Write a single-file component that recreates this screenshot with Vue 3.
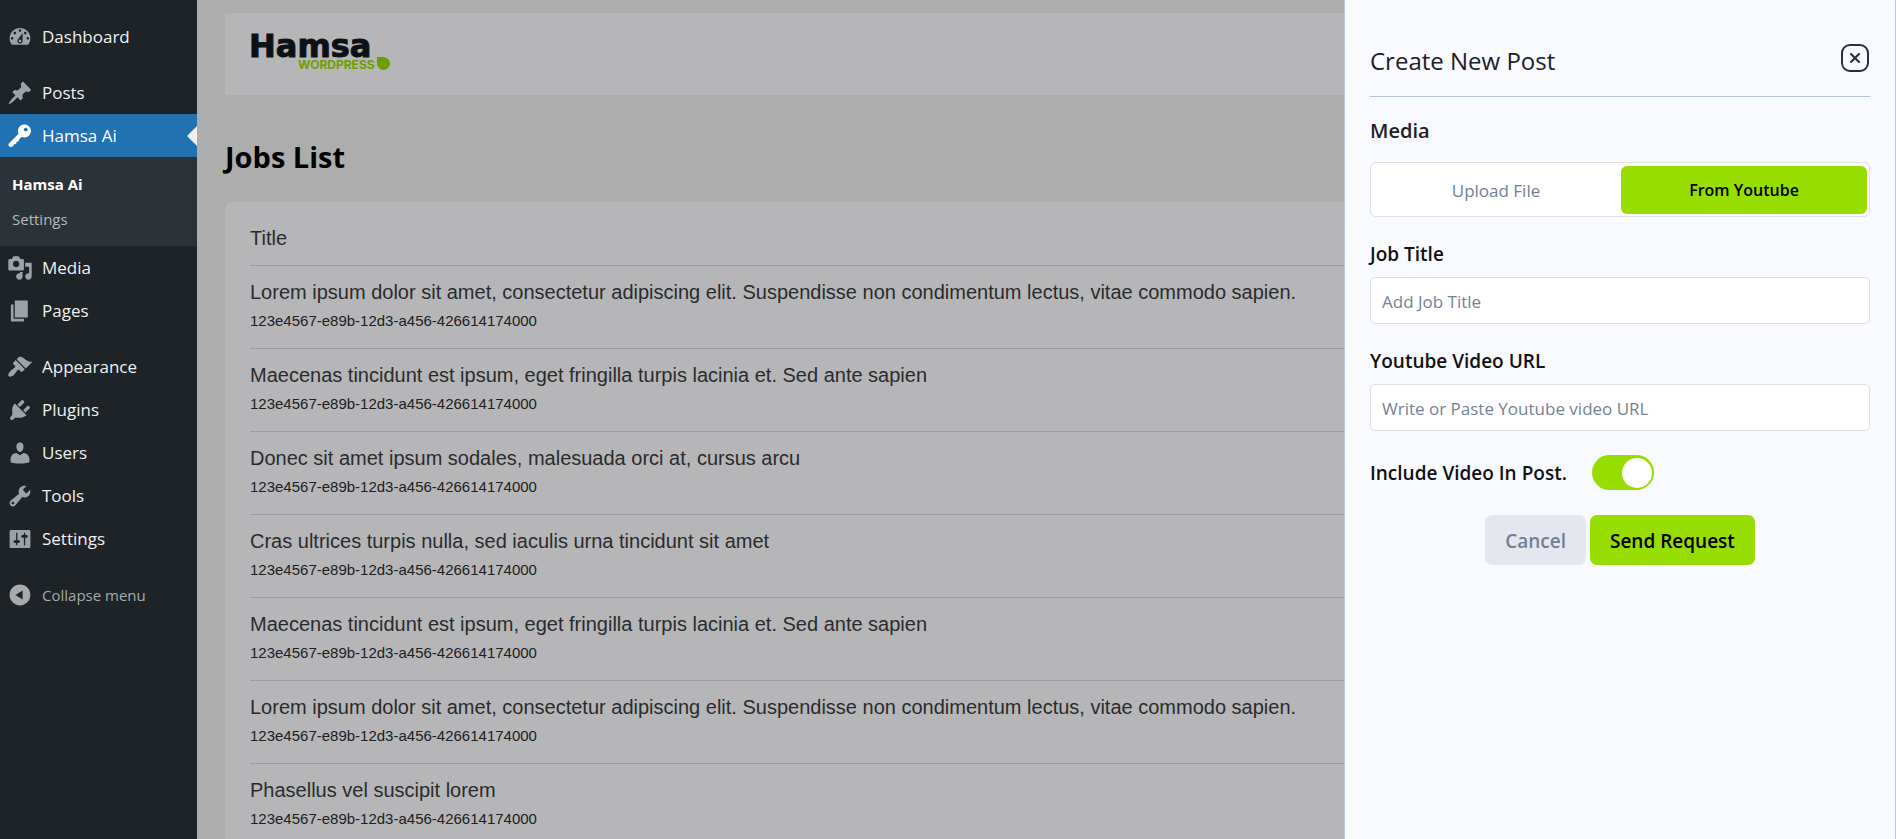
<script setup>
import { ref } from 'vue'

const icons = {
  dashboard: 'M3.76 16h12.48c1.1-1.37 1.76-3.11 1.76-5 0-4.42-3.58-8-8-8s-8 3.58-8 8c0 1.89.66 3.63 1.76 5zM10 4c.55 0 1 .45 1 1s-.45 1-1 1-1-.45-1-1 .45-1 1-1zM6 6c.55 0 1 .45 1 1s-.45 1-1 1-1-.45-1-1 .45-1 1-1zm8 0c.55 0 1 .45 1 1s-.45 1-1 1-1-.45-1-1 .45-1 1-1zm-5.37 5.55L12 7v6c0 1.1-.9 2-2 2s-2-.9-2-2c0-.57.24-1.08.63-1.45zM4 10c.55 0 1 .45 1 1s-.45 1-1 1-1-.45-1-1 .45-1 1-1zm12 0c.55 0 1 .45 1 1s-.45 1-1 1-1-.45-1-1 .45-1 1-1zm-5 3c0-.55-.45-1-1-1s-1 .45-1 1 .45 1 1 1 1-.45 1-1z',
  pin: 'M10.44 3.02l1.82-1.82 6.36 6.35-1.83 1.82c-1.05-.68-2.48-.57-3.41.36l-.75.75c-.92.93-1.04 2.35-.35 3.41l-1.83 1.82-2.41-2.41-2.8 2.79c-.42.42-3.38 2.71-3.8 2.29s1.86-3.39 2.28-3.81l2.79-2.79L4.1 9.36l1.83-1.82c1.05.69 2.48.57 3.4-.36l.75-.75c.93-.92 1.05-2.35.36-3.41z',
  key: 'M16.95 2.58c1.96 1.95 1.96 5.12 0 7.07-1.51 1.51-3.75 1.84-5.59 1.01l-1.87 1.9-.4 1.5-1.6.3-.4 1.6-1.5.3L4.6 17.6c-.7.6-1.9 1.1-2.8.5-1-.7-.9-1.9-.2-2.6l7.35-7.19c-.92-1.87-.62-4.18.93-5.73 1.95-1.96 5.12-1.96 7.07 0zm-2.51 4c.84 0 1.5-.7 1.5-1.5 0-.83-.66-1.5-1.5-1.5-.83 0-1.5.67-1.5 1.5 0 .8.67 1.5 1.5 1.5z',
  media: 'M13 11V4c0-.55-.45-1-1-1h-1.67L9 1H5L3.67 3H2c-.55 0-1 .45-1 1v7c0 .55.45 1 1 1h10c.55 0 1-.45 1-1zM7 4.5c1.38 0 2.5 1.12 2.5 2.5S8.38 9.5 7 9.5 4.5 8.38 4.5 7 5.62 4.5 7 4.5zM14 6h5v10.5c0 1.38-1.12 2.5-2.5 2.5S14 17.88 14 16.5s1.12-2.5 2.5-2.5c.17 0 .34.02.5.05V9h-3V6zm-4 8.05V13h2v3.5c0 1.38-1.12 2.5-2.5 2.5S7 17.88 7 16.5 8.12 14 9.5 14c.17 0 .34.02.5.05z',
  pages: 'M6 15V2h10v13H6zm-1 1h8v2H3V5h2v11z',
  appearance: 'M14.48 11.06L7.41 3.99l1.5-1.5c.5-.56 2.3-.47 3.51.32 1.21.8 1.43 1.28 2.91 2.1 1.18.64 2.45 1.26 4.45.85zm-.71.71L6.7 4.7 4.93 6.47c-.39.39-.39 1.02 0 1.41l1.06 1.06c.39.39.39 1.03 0 1.42-.6.6-1.43 1.11-2.21 1.69-.35.26-.7.53-1.01.84C1.43 14.23.4 16.08 1.4 17.07c.99 1 2.84-.03 4.18-1.36.31-.31.58-.66.85-1.02.57-.78 1.08-1.61 1.69-2.21.39-.39 1.02-.39 1.41 0l1.06 1.06c.39.39 1.02.39 1.41 0z',
  plugins: 'M13.11 4.36L9.87 7.6 8 5.73l3.24-3.24c.35-.34 1.05-.2 1.56.32.52.51.66 1.21.31 1.55zm-8 1.77l.91-1.12 9.01 9.01-1.19.84c-.71.71-2.63 1.16-3.82 1.16H6.14L4.9 17.26c-.59.59-1.54.59-2.12 0-.59-.58-.59-1.53 0-2.12l1.24-1.24v-3.88c0-1.13.4-3.19 1.09-3.89zm7.26 3.97l3.24-3.24c.34-.35 1.04-.21 1.55.31.52.51.66 1.21.31 1.55l-3.24 3.25z',
  users: 'M10 9.25c-2.27 0-2.73-3.44-2.73-3.44C7 4.02 7.82 2 9.97 2c2.16 0 2.98 2.02 2.71 3.81 0 0-.41 3.44-2.68 3.44zm0 2.57L12.72 10c2.39 0 4.52 2.33 4.52 4.53v2.49s-3.65 1.13-7.24 1.13c-3.65 0-7.24-1.13-7.24-1.13v-2.49c0-2.25 1.94-4.48 4.47-4.48z',
  tools: 'M16.68 9.77c-1.34 1.34-3.3 1.67-4.95.99l-5.41 6.52c-.99.99-2.59.99-3.58 0s-.99-2.59 0-3.57l6.52-5.42c-.68-1.65-.35-3.61.99-4.95 1.28-1.28 3.12-1.62 4.72-1.06l-2.89 2.89 2.82 2.82 2.86-2.87c.53 1.58.18 3.39-1.08 4.65zM3.81 16.21c.4.39 1.04.39 1.43 0 .4-.4.4-1.04 0-1.43-.39-.4-1.03-.4-1.43 0-.39.39-.39 1.03 0 1.43z',
  settings: 'M18 16V4c0-.55-.45-1-1-1H3c-.55 0-1 .45-1 1v12c0 .55.45 1 1 1h14c.55 0 1-.45 1-1zM8 11h1c.55 0 1 .45 1 1s-.45 1-1 1H8v1.5c0 .28-.22.5-.5.5s-.5-.22-.5-.5V13H6c-.55 0-1-.45-1-1s.45-1 1-1h1V5.5c0-.28.22-.5.5-.5s.5.22.5.5V11zm5-2h-1c-.55 0-1-.45-1-1s.45-1 1-1h1V5.5c0-.28.22-.5.5-.5s.5.22.5.5V7h1c.55 0 1 .45 1 1s-.45 1-1 1h-1v5.5c0 .28-.22.5-.5.5s-.5-.22-.5-.5V9z',
  collapse: 'M10 2c4.42 0 8 3.58 8 8s-3.58 8-8 8-8-3.58-8-8 3.58-8 8-8zm2 4.500L6.500 10l5.500 3.500z',
}

const menu = [
  [{ label: 'Dashboard', icon: 'dashboard' }],
  [
    { label: 'Posts', icon: 'pin' },
    { label: 'Hamsa Ai', icon: 'key', children: ['Hamsa Ai', 'Settings'] },
    { label: 'Media', icon: 'media' },
    { label: 'Pages', icon: 'pages' },
  ],
  [
    { label: 'Appearance', icon: 'appearance' },
    { label: 'Plugins', icon: 'plugins' },
    { label: 'Users', icon: 'users' },
    { label: 'Tools', icon: 'tools' },
    { label: 'Settings', icon: 'settings' },
  ],
]

const lorem = 'Lorem ipsum dolor sit amet, consectetur adipiscing elit. Suspendisse non condimentum lectus, vitae commodo sapien.'
const maecenas = 'Maecenas tincidunt est ipsum, eget fringilla turpis lacinia et. Sed ante sapien'
const jobId = '123e4567-e89b-12d3-a456-426614174000'
const jobs = [
  lorem,
  maecenas,
  'Donec sit amet ipsum sodales, malesuada orci at, cursus arcu',
  'Cras ultrices turpis nulla, sed iaculis urna tincidunt sit amet',
  maecenas,
  lorem,
  'Phasellus vel suscipit lorem',
]

const source = ref('youtube')
const jobTitle = ref('')
const videoUrl = ref('')
const includeVideo = ref(true)
</script>

<template>
  <div class="admin">
    <nav class="sidebar" aria-label="Admin menu">
      <ul v-for="(group, g) in menu" :key="g" class="group">
        <li v-for="item in group" :key="item.label">
          <a href="#" class="item" :class="{ current: item.children }">
            <svg class="icon" viewBox="0 0 20 20" aria-hidden="true"><path fill-rule="evenodd" :d="icons[item.icon]" /></svg>
            <span>{{ item.label }}</span>
          </a>
          <ul v-if="item.children" class="submenu">
            <li v-for="(child, c) in item.children" :key="child">
              <a href="#" class="subitem" :class="{ active: c === 0 }">{{ child }}</a>
            </li>
          </ul>
        </li>
      </ul>
      <button type="button" class="item collapse">
        <svg class="icon" viewBox="0 0 20 20" aria-hidden="true"><path fill-rule="evenodd" :d="icons.collapse" /></svg>
        <span>Collapse menu</span>
      </button>
    </nav>

    <main class="main">
      <header class="brandbar">
        <svg class="logo" viewBox="0 0 142 36" role="img" aria-label="Hamsa WordPress">
          <text class="logo-name" x="-1" y="21">Hamsa</text>
          <text class="logo-sub" x="48" y="33">WORDPRESS</text>
          <path class="logo-leaf" d="M127 21h7a6.500 6.500 0 1 1-7 6.500z" />
        </svg>
      </header>
      <h1 class="page-title">Jobs List</h1>
      <section class="card">
        <table class="jobs">
          <thead>
            <tr><th scope="col">Title</th></tr>
          </thead>
          <tbody>
            <tr v-for="(job, i) in jobs" :key="i">
              <td>
                <div class="job-name">{{ job }}</div>
                <div class="job-id">{{ jobId }}</div>
              </td>
            </tr>
          </tbody>
        </table>
      </section>
      <div class="overlay"></div>
    </main>

    <aside class="drawer" role="dialog" aria-labelledby="drawer-title">
      <form class="form" @submit.prevent>
        <header class="drawer-head">
          <h2 id="drawer-title" class="drawer-title">Create New Post</h2>
          <button type="button" class="close" aria-label="Close">
            <svg viewBox="0 0 28 28" aria-hidden="true">
              <rect x="1" y="1" width="26" height="26" rx="8" />
              <path d="M10 10l8 8M18 10l-8 8" />
            </svg>
          </button>
        </header>

        <h3 class="section-title">Media</h3>
        <div class="tabs" role="group" aria-label="Media">
          <button type="button" class="tab" :class="{ on: source === 'file' }" @click="source = 'file'">Upload File</button>
          <button type="button" class="tab" :class="{ on: source === 'youtube' }" @click="source = 'youtube'">From Youtube</button>
        </div>

        <div class="field">
          <label for="job-title">Job Title</label>
          <input id="job-title" v-model="jobTitle" type="text" placeholder="Add Job Title" />
        </div>
        <div class="field">
          <label for="video-url">Youtube Video URL</label>
          <input id="video-url" v-model="videoUrl" type="text" placeholder="Write or Paste Youtube video URL" />
        </div>

        <div class="switch-row">
          <label for="include-video">Include Video In Post.</label>
          <input id="include-video" v-model="includeVideo" type="checkbox" class="switch" />
        </div>

        <div class="actions">
          <button type="button" class="btn cancel">Cancel</button>
          <button type="submit" class="btn send">Send Request</button>
        </div>
      </form>
    </aside>
  </div>
</template>

<style>
body {
  margin: 0;
  overflow: hidden;
}
</style>

<style scoped>
* {
  box-sizing: border-box;
}
.admin {
  display: flex;
  height: 100vh;
  overflow: hidden;
  font-family: "Segoe UI", "Open Sans", "Noto Sans", sans-serif;
  font-size: 16px;
}
button,
input {
  font-family: inherit;
}
ul {
  margin: 0;
  padding: 0;
  list-style: none;
}

/* Sidebar */
.sidebar {
  display: flex;
  flex-direction: column;
  gap: 13px;
  flex: none;
  width: 197px;
  padding-top: 15px;
  background: #1d2327;
}
.item {
  position: relative;
  display: flex;
  align-items: center;
  gap: 9px;
  width: 100%;
  height: 43px;
  padding: 0 7px;
  border: 0;
  background: none;
  color: #f0f0f1;
  font-size: 17px;
  text-decoration: none;
}
.icon {
  flex: none;
  width: 26px;
  height: 26px;
  fill: #9ca2a7;
}
.current {
  background: #2271b1;
  color: #fff;
}
.current .icon {
  fill: #fff;
}
.current::after {
  content: "";
  position: absolute;
  right: 0;
  top: 12px;
  border: 10px solid transparent;
  border-left: 0;
  border-right-color: #f0f0f1;
}
.submenu {
  height: 89px;
  padding: 10px 0 9px;
  background: #2c3338;
}
.subitem {
  display: block;
  padding: 0 12px;
  color: #b4b9be;
  font-size: 15px;
  line-height: 35px;
  text-decoration: none;
}
.subitem.active {
  color: #fff;
  font-weight: 700;
}
.collapse {
  color: #a7aaad;
  font-size: 15px;
}
.collapse .icon {
  fill: #a7aaad;
}

/* Main area */
.main {
  position: relative;
  flex: 1;
  min-width: 0;
  padding: 13px 28px 0;
  overflow: hidden;
  background: #f0f0f1;
}
.brandbar {
  display: flex;
  align-items: center;
  height: 82px;
  padding: 0 25px;
  background: #fcfcff;
}
.logo {
  width: 142px;
  height: 36px;
  overflow: visible;
}
.logo-name {
  fill: #0f1a22;
  stroke: #0f1a22;
  stroke-width: 1;
  font: 700 32px "DejaVu Sans", sans-serif;
}
.logo-sub {
  fill: #97dd00;
  font: 700 12px Inter, sans-serif;
}
.logo-leaf {
  fill: #97dd00;
}
.page-title {
  margin: 42px 0 25px;
  color: #000;
  font-size: 29px;
  font-weight: 700;
  line-height: 40px;
}
.card {
  padding: 0 25px;
  border-radius: 8px;
  background: #fcfcff;
}
.jobs {
  width: 100%;
  border-collapse: separate;
  border-spacing: 0;
  color: #3a3d42;
  font-family: Arial, "Liberation Sans", sans-serif;
}
.jobs th {
  height: 64px;
  padding: 10px 0 0;
  border-bottom: 1px solid #d8d8dc;
  font-size: 20px;
  font-weight: 400;
  text-align: left;
}
.jobs td {
  padding: 12px 0;
  border-bottom: 1px solid #d8d8dc;
}
.job-name {
  font-size: 20px;
  line-height: 28px;
}
.job-id {
  color: #2c2d30;
  font-size: 15px;
  line-height: 30px;
}
.overlay {
  position: absolute;
  inset: 0;
  background: rgba(0, 0, 0, 0.28);
}

/* Drawer */
.drawer {
  position: fixed;
  top: 0;
  right: 0;
  bottom: 0;
  width: min(552px, 100%);
  padding: 40px 25px;
  border: 1px solid #bcc5de;
  border-width: 0 1px;
  background: #f9faff;
  color: #1d2025;
}
.form {
  display: flex;
  flex-direction: column;
}
.drawer-head {
  display: flex;
  align-items: flex-start;
  justify-content: space-between;
  height: 57px;
  padding: 4px 1px 0 0;
  border-bottom: 1px solid #b3c0dc;
}
.drawer-title {
  margin: 0;
  font-size: 24px;
  font-weight: 400;
  line-height: 34px;
}
.close {
  display: flex;
  padding: 0;
  border: 0;
  background: none;
}
.close svg {
  width: 28px;
  height: 28px;
  fill: none;
  stroke: #2b2e33;
  stroke-width: 2;
  stroke-linecap: round;
}
.section-title {
  margin: 18px 0 16px;
  font-size: 20px;
  font-weight: 600;
  line-height: 31px;
}
.tabs {
  display: grid;
  grid-template-columns: 1fr 1fr;
  gap: 2px;
  height: 55px;
  padding: 3px 2px 2px;
  border: 1px solid #dcdfe6;
  border-radius: 6px;
  background: #fff;
}
.tab {
  padding: 0;
  border: 0;
  border-radius: 6px;
  background: none;
  color: #718096;
  font-size: 17px;
}
.tab.on {
  background: #97dd00;
  color: #000;
  font-size: 16px;
  font-weight: 600;
}
.field {
  display: flex;
  flex-direction: column;
  gap: 9px;
  margin-top: 23px;
}
.field label,
.switch-row label {
  color: #111;
  font-size: 19px;
  font-weight: 600;
  line-height: 28px;
}
.field input {
  height: 47px;
  padding: 2px 11px 0;
  border: 1px solid #dcdfe6;
  border-radius: 5px;
  background: #fff;
  font-size: 17px;
}
.field input::placeholder {
  color: #758195;
}
.switch-row {
  display: flex;
  align-items: center;
  gap: 25px;
  margin-top: 24px;
}
.switch {
  display: flex;
  align-items: center;
  justify-content: flex-end;
  appearance: none;
  width: 62px;
  height: 35px;
  margin: 0;
  padding: 0 2px;
  border-radius: 18px;
  background: #97dd00;
}
.switch::before {
  content: "";
  width: 30px;
  height: 30px;
  border-radius: 50%;
  background: #fff;
}
.switch:not(:checked) {
  justify-content: flex-start;
  background: #c7ccd6;
}
.actions {
  display: flex;
  justify-content: center;
  gap: 4px;
  margin-top: 25px;
}
.btn {
  height: 50px;
  padding: 2px 20px 0;
  border: 0;
  border-radius: 7px;
  font-size: 19px;
  font-weight: 600;
}
.cancel {
  background: #e4e7ee;
  color: #718096;
}
.send {
  background: #97dd00;
  color: #000;
}
</style>
